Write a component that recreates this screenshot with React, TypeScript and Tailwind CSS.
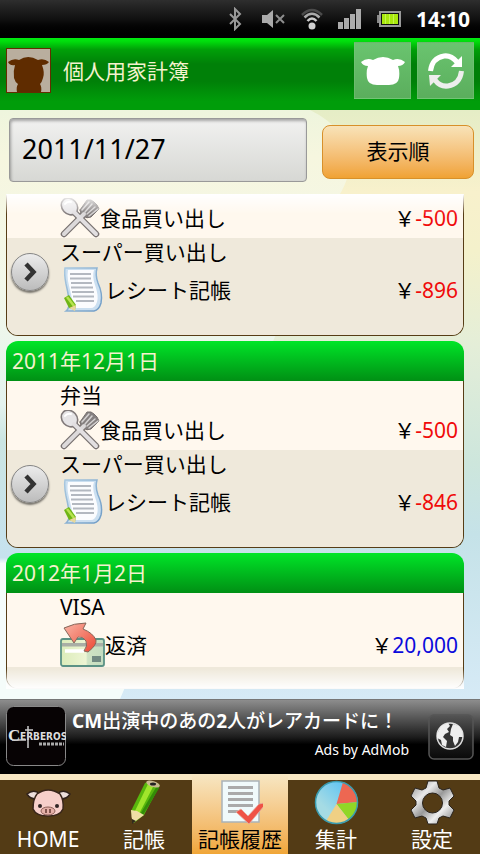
import React from "react";

type Tone = "red" | "blue";

type Entry = {
  title?: string;
  category: string;
  icon: "cutlery" | "receipt" | "card";
  amount: string;
  tone: Tone;
  expandable?: boolean;
};

type Section = { date?: string; entries: Entry[]; more?: boolean };

const sections: Section[] = [
  {
    entries: [
      { category: "食品買い出し", icon: "cutlery", amount: "-500", tone: "red" },
      { title: "スーパー買い出し", category: "レシート記帳", icon: "receipt", amount: "-896", tone: "red", expandable: true },
    ],
  },
  {
    date: "2011年12月1日",
    entries: [
      { title: "弁当", category: "食品買い出し", icon: "cutlery", amount: "-500", tone: "red" },
      { title: "スーパー買い出し", category: "レシート記帳", icon: "receipt", amount: "-846", tone: "red", expandable: true },
    ],
  },
  {
    date: "2012年1月2日",
    entries: [{ title: "VISA", category: "返済", icon: "card", amount: "20,000", tone: "blue" }],
    more: true,
  },
];

function CutleryIcon() {
  return (
    <svg viewBox="0 0 40 40" className="h-10 w-10 shrink-0" aria-hidden="true">
      <g strokeLinecap="round" strokeLinejoin="round">
        <path d="M14 14 L36 36" stroke="#77706f" strokeWidth="6.5" />
        <path d="M25 15 L4 36" stroke="#77706f" strokeWidth="6.5" />
        <path d="M20 12 L27 2 L31 2 L34 4 L37 7 L39 11 L31 19 Q27 21 23 18 Q20 15 20 12Z" fill="#858080" stroke="#77706f" />
        <path d="M24 16 L4 36" stroke="#dcd9da" strokeWidth="4" />
        <path d="M22 12 L29 4 M25 14 L32 6 M27 16 L35 9 M29 18 L38 11" stroke="#d5d2d2" strokeWidth="1.5" />
        <ellipse cx="9.5" cy="8.5" rx="7.5" ry="9" transform="rotate(-42 9.5 8.5)" fill="#e6e4e6" stroke="#827b7b" strokeWidth="1.6" />
        <path d="M14 14 L36 36" stroke="#e2dfe1" strokeWidth="4" />
        <path d="M5 6 Q7 3 11 4" stroke="#fff" strokeWidth="2" fill="none" />
      </g>
    </svg>
  );
}

function ReceiptIcon() {
  return (
    <svg viewBox="0 0 45 45" className="h-[45px] w-[45px] shrink-0" aria-hidden="true">
      <defs>
        <linearGradient id="receiptEdge" x1="0" y1="0" x2="1" y2="1">
          <stop offset="0" stopColor="#a9c8df" />
          <stop offset="1" stopColor="#6f9cc6" />
        </linearGradient>
      </defs>
      <path d="M5 1 H37 Q35 8 38 16 Q43 27 41 36 Q39 43 34 44 H6 Q10 41 9 33 Q8 25 6 17 Q4 7 5 1Z" fill="#cbdff0" stroke="url(#receiptEdge)" strokeWidth="1.5" />
      <path d="M8 3 H34 Q32 9 35 18 Q39 29 37 35 Q35 41 31 41 H11 Q13 35 11 27 Q9 19 8 14 Q7 8 8 3Z" fill="#fbfcfe" />
      <path d="M10 7H31M10 11.5H31M11 16H32M11 20.500H33M12 25H34M13 29.500H34M16 34H34" stroke="#b3b8c0" strokeWidth="1.8" />
      <path d="M4 31 L9 28 L16 38 L15 43 L9 41Z" fill="#6fb516" />
      <path d="M7 30 L14 39" stroke="#b7e34f" strokeWidth="2.5" />
      <path d="M9 41 L16 38 L15 44Z" fill="#e8d79a" />
    </svg>
  );
}

function CardIcon() {
  return (
    <svg viewBox="0 0 45 45" className="h-[45px] w-[45px] shrink-0" aria-hidden="true">
      <defs>
        <linearGradient id="cardFace" x1="0" y1="0" x2="1" y2="0">
          <stop offset="0" stopColor="#dcecba" />
          <stop offset=".58" stopColor="#edf5d4" />
          <stop offset=".62" stopColor="#cfe4c4" />
          <stop offset="1" stopColor="#c4dcc0" />
        </linearGradient>
        <linearGradient id="cardArrow" x1="0" y1="0" x2="1" y2="1">
          <stop offset="0" stopColor="#f9b5a5" />
          <stop offset="1" stopColor="#ed4734" />
        </linearGradient>
      </defs>
      <rect x="1" y="17" width="43" height="27" rx="2" fill="url(#cardFace)" stroke="#5b9285" strokeWidth="1.8" />
      <rect x="2" y="21" width="41" height="3.5" fill="#a9aea5" />
      <path d="M5 29H24" stroke="#fff" strokeWidth="3.5" />
      <rect x="32" y="34" width="9" height="6" fill="#718a82" />
      <path d="M4 6 Q14 1 26 1 L23 7 Q33 11 36 18 Q37 23 28 30 L24 29 Q28 24 26 19 Q23 14 18 15 L14 21Z" fill="url(#cardArrow)" stroke="#85685b" strokeWidth="1" />
    </svg>
  );
}

const entryIcons = { cutlery: <CutleryIcon />, receipt: <ReceiptIcon />, card: <CardIcon /> };

function EntryRow({ entry, shaded }: { entry: Entry; shaded: boolean }) {
  return (
    <li className={`flex items-start pr-[5px] ${shaded ? "bg-[#efe9db]" : "bg-[#fff8ee]"} ${entry.expandable ? "pb-[23px]" : ""}`}>
      <div className="w-[53px] shrink-0 pt-[15px] pl-1">
        {entry.expandable && (
          <button
            type="button"
            aria-label="詳細"
            className="flex h-[38px] w-[38px] items-center justify-center rounded-full border border-[#858585] bg-linear-to-b from-[#ececec] to-[#bcbcbc] shadow-[0_2px_2px_#00000080]"
          >
            <svg viewBox="0 0 20 20" className="h-5 w-5" aria-hidden="true">
              <path d="M6 2 L13.5 10 L6 18" fill="none" stroke="#333" strokeWidth="4.5" />
            </svg>
          </button>
        )}
      </div>
      <div className="min-w-0 flex-1">
        {entry.title ? <div className="h-[29px] leading-[29px]">{entry.title}</div> : <div className="h-1" />}
        <div className="flex items-center">
          {entryIcons[entry.icon]}
          <span className="flex-1 pt-0.5 whitespace-nowrap">{entry.category}</span>
          <span className="pt-0.5 whitespace-nowrap">
            ￥<span className={entry.tone === "red" ? "text-[#f00a0a]" : "text-[#0a0adc]"}>{entry.amount}</span>
          </span>
        </div>
      </div>
    </li>
  );
}

function LedgerSection({ section }: { section: Section }) {
  return (
    <section className="shrink-0">
      {section.date && (
        <h2 className="h-10 rounded-t-xl bg-linear-to-b from-[#00e628] to-[#009014] pl-1.5 leading-[41px] text-[#f5f2cd]">{section.date}</h2>
      )}
      <ul className="overflow-hidden rounded-b-xl border border-t-0 border-[#573d16]">
        {section.entries.map((entry, i) => (
          <EntryRow key={i} entry={entry} shaded={i % 2 === 1} />
        ))}
        {section.more && <li className="h-[21px] bg-[#efe9db]" />}
      </ul>
    </section>
  );
}

function StatusBar() {
  return (
    <div className="flex h-[38px] shrink-0 items-center justify-end gap-[15px] bg-linear-to-b from-[#2e2e2e] via-[#111] to-black pr-2.5">
      <svg viewBox="0 0 20 24" className="h-6 w-5" fill="none" stroke="#999" strokeWidth="2" aria-hidden="true">
        <path d="M3 7 L13 17 L8 22 V2 L13 7 L3 17" />
      </svg>
      <svg viewBox="0 0 24 20" className="h-5 w-6" aria-hidden="true">
        <path d="M0 6H5L11 1V19L5 14H0Z" fill="#aaa" />
        <path d="M14 6L22 14M22 6L14 14" stroke="#8d8d8d" strokeWidth="2" />
      </svg>
      <svg viewBox="0 0 22 22" className="h-[22px] w-[22px]" fill="none" aria-hidden="true">
        <path d="M1 7 Q11 -3 21 7" stroke="#4b4b4b" strokeWidth="2.5" />
        <path d="M3.5 9.5 Q11 2 18.5 9.5" stroke="#aaa" strokeWidth="2.5" />
        <path d="M6.5 13 Q11 8 15.5 13" stroke="#ccc" strokeWidth="2.5" />
        <circle cx="11" cy="18" r="3.5" fill="#d0d0d0" />
      </svg>
      <svg viewBox="0 0 24 20" className="h-5 w-6" fill="#aaa" aria-hidden="true">
        <path d="M0 13H5V20H0ZM6 9H11V20H6ZM12 5H17V20H12ZM18 0H23V20H18Z" />
      </svg>
      <svg viewBox="0 0 24 18" className="h-[18px] w-6" aria-hidden="true">
        <path d="M0 5H3V13H0Z" fill="#888" />
        <rect x="3" y="2" width="20" height="14" fill="#111" stroke="#999" strokeWidth="2" />
        <rect x="5" y="4" width="16" height="10" fill="#a9e80d" />
        <path d="M8.5 4V14M12.5 4V14M16.5 4V14" stroke="#c4f54c" />
      </svg>
      <span className="text-[21px] leading-none font-bold text-white">14:10</span>
    </div>
  );
}

function Header() {
  return (
    <header className="flex h-[72px] shrink-0 items-start bg-[linear-gradient(#00ec10_0%,#00dc0c_5%,#00a008_16%,#008008_36%,#008008_60%,#009d0a_88%,#009d0a_100%)] px-1.5 pt-1">
      <svg viewBox="0 0 45 45" className="mt-1.5 h-[45px] w-[45px]" aria-hidden="true">
        <rect x=".5" y=".5" width="44" height="44" fill="#b9ae9e" stroke="#642d00" />
        <path d="M2 14 Q7 10 13 12 Q22 6 32 12 Q38 10 43 14 Q41 17 36 17 Q39 25 37 30 Q36 34 34 36 Q36 39 35 44 H11 Q10 39 12 36 Q9 34 8 30 Q7 23 9 17 Q4 18 2 14Z" fill="#5f2c00" />
      </svg>
      <h1 className="ml-3 flex-1 text-[21px] leading-[58px] text-[#f5f2cd]">個人用家計簿</h1>
      <div className="flex gap-1.5">
        <button type="button" aria-label="ぶた" className="flex h-[57px] w-[57px] items-center justify-center border border-[#80c980]/40 bg-linear-to-b from-[#6ac46f] to-[#5bae5d]">
          <svg viewBox="0 0 44 30" className="h-[30px] w-11" aria-hidden="true">
            <path d="M0 6 Q6 1 12 4 Q22 -2 32 4 Q38 1 44 6 Q42 10 37 10 Q39 15 38 22 Q37 29 28 29 H16 Q7 29 6 22 Q5 15 7 10 Q2 10 0 6Z" fill="#fff" />
          </svg>
        </button>
        <button type="button" aria-label="更新" className="flex h-[57px] w-[57px] items-center justify-center border border-[#80c980]/40 bg-linear-to-b from-[#6ac46f] to-[#5bae5d]">
          <svg viewBox="0 0 36 36" className="h-9 w-9" aria-hidden="true">
            <path d="M2.5 18 Q4 5 16 3 Q23 2 29 9" fill="none" stroke="#fff" strokeWidth="5" />
            <path d="M34 3 V14 H23Z" fill="#fff" />
            <path d="M33.5 18 Q32 31 20 33 Q12 34 7 27" fill="none" stroke="#eee" strokeWidth="5" />
            <path d="M2 33 L1 22 H13Z" fill="#eee" />
          </svg>
        </button>
      </div>
    </header>
  );
}

function AdBanner() {
  return (
    <a href="#ad" className="flex h-[75px] shrink-0 border-t border-[#777] bg-[linear-gradient(#8d8d8d_0%,#1d1d1d_50%,#000_60%)] px-1.5 pt-1.5 text-white">
      <svg viewBox="0 0 60 60" className="h-[60px] w-[60px] shrink-0" role="img" aria-label="CERBEROS">
        <rect x=".5" y=".5" width="59" height="59" rx="7" fill="#070304" stroke="#888" />
        <text x="2" y="35" fill="#e4e4e4" fontFamily="Liberation Serif, serif" fontWeight="700" fontSize="17">C</text>
        <text x="14" y="34" fill="#dcdcdc" fontFamily="DejaVu Sans Condensed, DejaVu Sans, sans-serif" fontWeight="700" fontSize="10">ERBEROS</text>
        <path d="M22 20V42M6 34H20M19 24H27" stroke="#ccc" strokeWidth="1.5" />
        <path d="M33 38H58" stroke="#aaa" strokeWidth="3" strokeDasharray="3 1" />
      </svg>
      <div className="ml-1.5 min-w-0 flex-1">
        <p className="text-[19px] leading-[31px] font-medium whitespace-nowrap">
          <b>CM</b>出演中のあの<b>2</b>人がレアカードに！
        </p>
        <p className="pr-[19px] text-right text-[14px] leading-[26px]">Ads by AdMob</p>
      </div>
      <svg viewBox="0 0 46 46" className="mt-2 h-[46px] w-[46px] shrink-0" aria-hidden="true">
        <defs>
          <linearGradient id="globeTile" x1="0" y1="0" x2="0" y2="1">
            <stop offset="0" stopColor="#555" />
            <stop offset=".55" stopColor="#222" />
            <stop offset="1" stopColor="#090909" />
          </linearGradient>
        </defs>
        <rect x="1" y="1" width="44" height="44" rx="5" fill="url(#globeTile)" stroke="#555" strokeWidth="1.5" />
        <circle cx="22" cy="22" r="13" fill="#333" stroke="#ddd" strokeWidth="1.5" />
        <path d="M9 20 L13 12 L20 9 L22 12 L19 15 L21 18 L17 20 L15 23 L19 27 L18 33 L14 31 L13 26 L9 24Z" fill="#eee" />
        <path d="M23 15 L25 10 L31 12 L34 17 L35 23 L31 23 L30 28 L27 32 L25 27 L25 23 L22 21Z" fill="#eee" />
      </svg>
    </a>
  );
}

const tabIcon = "mx-auto block h-[45px] w-[45px]";

const tabs: { label: string; icon: React.ReactNode; active?: boolean }[] = [
  {
    label: "HOME",
    icon: (
      <svg viewBox="0 0 45 45" className={tabIcon} aria-hidden="true">
        <path d="M1 14 Q7 9 13 13 L10 19 Q4 19 1 14Z M44 14 Q38 9 32 13 L35 19 Q41 19 44 14Z" fill="#ecdedc" stroke="#30221b" strokeWidth="1.5" />
        <path d="M11 14 Q22 6 34 14 Q38 20 37 29 Q34 36 22 36 Q10 36 7 29 Q7 19 11 14Z" fill="#f6cfca" stroke="#38251a" strokeWidth="1.5" />
        <ellipse cx="22" cy="31" rx="7" ry="4" fill="#e5b0a8" stroke="#8d6058" />
        <path d="M20 29V33M24 29V33" stroke="#633730" strokeWidth="1.5" />
        <circle cx="14" cy="26" r="2" fill="#302525" />
        <circle cx="31" cy="26" r="2" fill="#302525" />
      </svg>
    ),
  },
  {
    label: "記帳",
    icon: (
      <svg viewBox="0 0 45 45" className={tabIcon} aria-hidden="true">
        <path d="M9 31 L23 3 Q29 -1 38 5 L22 35 L12 43Z" fill="#58b70d" />
        <path d="M13 31 L26 4 L32 5 L17 34Z" fill="#a0e52c" />
        <path d="M20 34 L36 7" stroke="#338c08" strokeWidth="3" />
        <path d="M9 30 L15 31 L22 35 L11 43 Q9 37 9 30Z" fill="#f0dfa5" />
        <path d="M10 39 L14 41 L10 44Z" fill="#302b1c" />
        <ellipse cx="31" cy="4" rx="7" ry="3" transform="rotate(18 31 4)" fill="#c8b98f" />
        <ellipse cx="31" cy="4" rx="3" ry="1.5" fill="#222" />
      </svg>
    ),
  },
  {
    label: "記帳履歴",
    active: true,
    icon: (
      <svg viewBox="0 0 45 45" className={tabIcon} aria-hidden="true">
        <rect x="4" y="1" width="37" height="41" fill="#f0fafb" stroke="#a9b2b8" strokeWidth="1.5" />
        <path d="M10 7.5H35M10 13.5H35M10 19.5H35M10 25.5H35M10 31.5H25" stroke="#aaa" strokeWidth="3" />
        <path d="M18 32 L23 29 L30 36 L41 24 L46 23 L46 26 L31 44Z" fill="#ef5245" stroke="#e5ada1" strokeWidth=".8" />
      </svg>
    ),
  },
  {
    label: "集計",
    icon: (
      <svg viewBox="0 0 45 45" className={tabIcon} aria-hidden="true">
        <defs>
          <linearGradient id="pieBlue" x1="1" y1="0" x2="0" y2="1">
            <stop offset=".2" stopColor="#63c5f2" />
            <stop offset=".7" stopColor="#a5dbe4" />
          </linearGradient>
        </defs>
        <circle cx="22.5" cy="22.5" r="21" fill="url(#pieBlue)" />
        <path d="M22.5 24 L29 2 Q43 8 44 22Z" fill="#ed6752" />
        <path d="M22.5 24 L44 22 Q43 33 35 40Z" fill="#91d626" />
        <path d="M22.5 24 L35 40 Q24 47 12 41Z" fill="#efd084" />
        <circle cx="22.5" cy="22.5" r="21" fill="none" stroke="#3a9cb0" strokeWidth="1.5" />
      </svg>
    ),
  },
  {
    label: "設定",
    icon: (
      <svg viewBox="0 0 45 45" className={tabIcon} aria-hidden="true">
        <defs>
          <linearGradient id="gearMetal" x1="0" y1="0" x2="1" y2="1">
            <stop offset="0" stopColor="#888" />
            <stop offset=".3" stopColor="#e9e9e9" />
            <stop offset=".5" stopColor="#999" />
            <stop offset=".7" stopColor="#eee" />
            <stop offset="1" stopColor="#777" />
          </linearGradient>
        </defs>
        <path
          fillRule="evenodd"
          d="M18 1 H27 L29 8 L33 10 L40 8 L44 16 L39 21 V25 L44 30 L40 38 L33 36 L29 38 L27 44 H18 L16 38 L12 36 L5 38 L1 30 L6 25 V21 L1 16 L5 8 L12 10 L16 8Z M22.5 13 A10 10 0 1 0 22.5 33 A10 10 0 1 0 22.5 13Z"
          fill="url(#gearMetal)"
          stroke="#29231d"
        />
      </svg>
    ),
  },
];

function TabBar() {
  return (
    <nav className="grid h-20 shrink-0 grid-cols-5 bg-[#f7e7c3]">
      {tabs.map((tab) => (
        <button
          key={tab.label}
          type="button"
          aria-current={tab.active ? "page" : undefined}
          className={
            tab.active
              ? "flex flex-col bg-linear-to-b from-[#f7e7c3] to-[#f0a637] pt-1.5 text-[21px] text-black"
              : "flex flex-col border-t-6 border-[#f7e7c3] bg-[#533b15] text-[21px] text-white"
          }
        >
          {tab.icon}
          <span className="w-full text-center leading-[29px] whitespace-nowrap">{tab.label}</span>
        </button>
      ))}
    </nav>
  );
}

function Backdrop() {
  return (
    <svg viewBox="0 0 480 600" preserveAspectRatio="none" className="absolute inset-0 -z-10 h-full w-full" aria-hidden="true">
      <defs>
        <linearGradient id="skyRight" x1="0" y1="0" x2="0" y2="1">
          <stop offset="0" stopColor="#e5edc6" />
          <stop offset=".14" stopColor="#f8f1cc" />
          <stop offset=".24" stopColor="#f4f1cb" />
          <stop offset=".4" stopColor="#e4eed8" />
          <stop offset=".6" stopColor="#cde6dc" />
          <stop offset=".72" stopColor="#c5e2e8" />
          <stop offset="1" stopColor="#d6eaf6" />
        </linearGradient>
        <linearGradient id="skyLeft" x1="0" y1="0" x2="0" y2="1">
          <stop offset="0" stopColor="#eef5dd" />
          <stop offset=".08" stopColor="#f6f6df" />
          <stop offset=".3" stopColor="#f3f8ea" />
          <stop offset=".5" stopColor="#e4f3ee" />
          <stop offset=".56" stopColor="#cbe5e2" />
          <stop offset=".76" stopColor="#c6e2ee" />
          <stop offset=".77" stopColor="#f5fcfa" />
          <stop offset="1" stopColor="#f5fcfa" />
        </linearGradient>
      </defs>
      <rect width="480" height="600" fill="url(#skyRight)" />
      <path d="M0 0H310Q350 20 350 55Q348 78 330 100L120 600H0Z" fill="url(#skyLeft)" />
    </svg>
  );
}

export default function App() {
  return (
    <div className="flex h-screen flex-col bg-[#f5f7e6] font-['Noto_Sans','Noto_Sans_CJK_JP',sans-serif] text-[21px] text-black">
      <StatusBar />
      <Header />
      <main className="relative isolate flex min-h-0 flex-1 flex-col pb-2.5">
        <Backdrop />
        <form className="flex items-center gap-[15px] px-1.5 pt-2 pb-3 pl-[9px]" onSubmit={(e) => e.preventDefault()}>
          <input
            type="text"
            aria-label="日付"
            defaultValue="2011/11/27"
            className="h-16 min-w-0 flex-1 rounded border border-[#999] bg-linear-to-b from-[#f1f1f0] to-[#d7d8d4] px-3 pb-1 text-[27px] shadow-[inset_1px_2px_3px_#00000050] outline-none"
          />
          <button type="button" className="mt-1 h-[54px] w-[152px] rounded-lg border border-[#d8902a] bg-linear-to-b from-[#f8e3b8] to-[#f0a232]">
            表示順
          </button>
        </form>
        <div className="relative mr-4 ml-1.5 flex min-h-0 flex-1 flex-col gap-[5px] overflow-hidden">
          {sections.map((section, i) => (
            <LedgerSection key={i} section={section} />
          ))}
          <div className="pointer-events-none absolute inset-x-0 top-0 h-5 bg-linear-to-b from-white to-transparent" />
          <div className="pointer-events-none absolute inset-x-0 bottom-0 h-5 bg-linear-to-t from-white to-transparent" />
        </div>
      </main>
      <AdBanner />
      <TabBar />
    </div>
  );
}
